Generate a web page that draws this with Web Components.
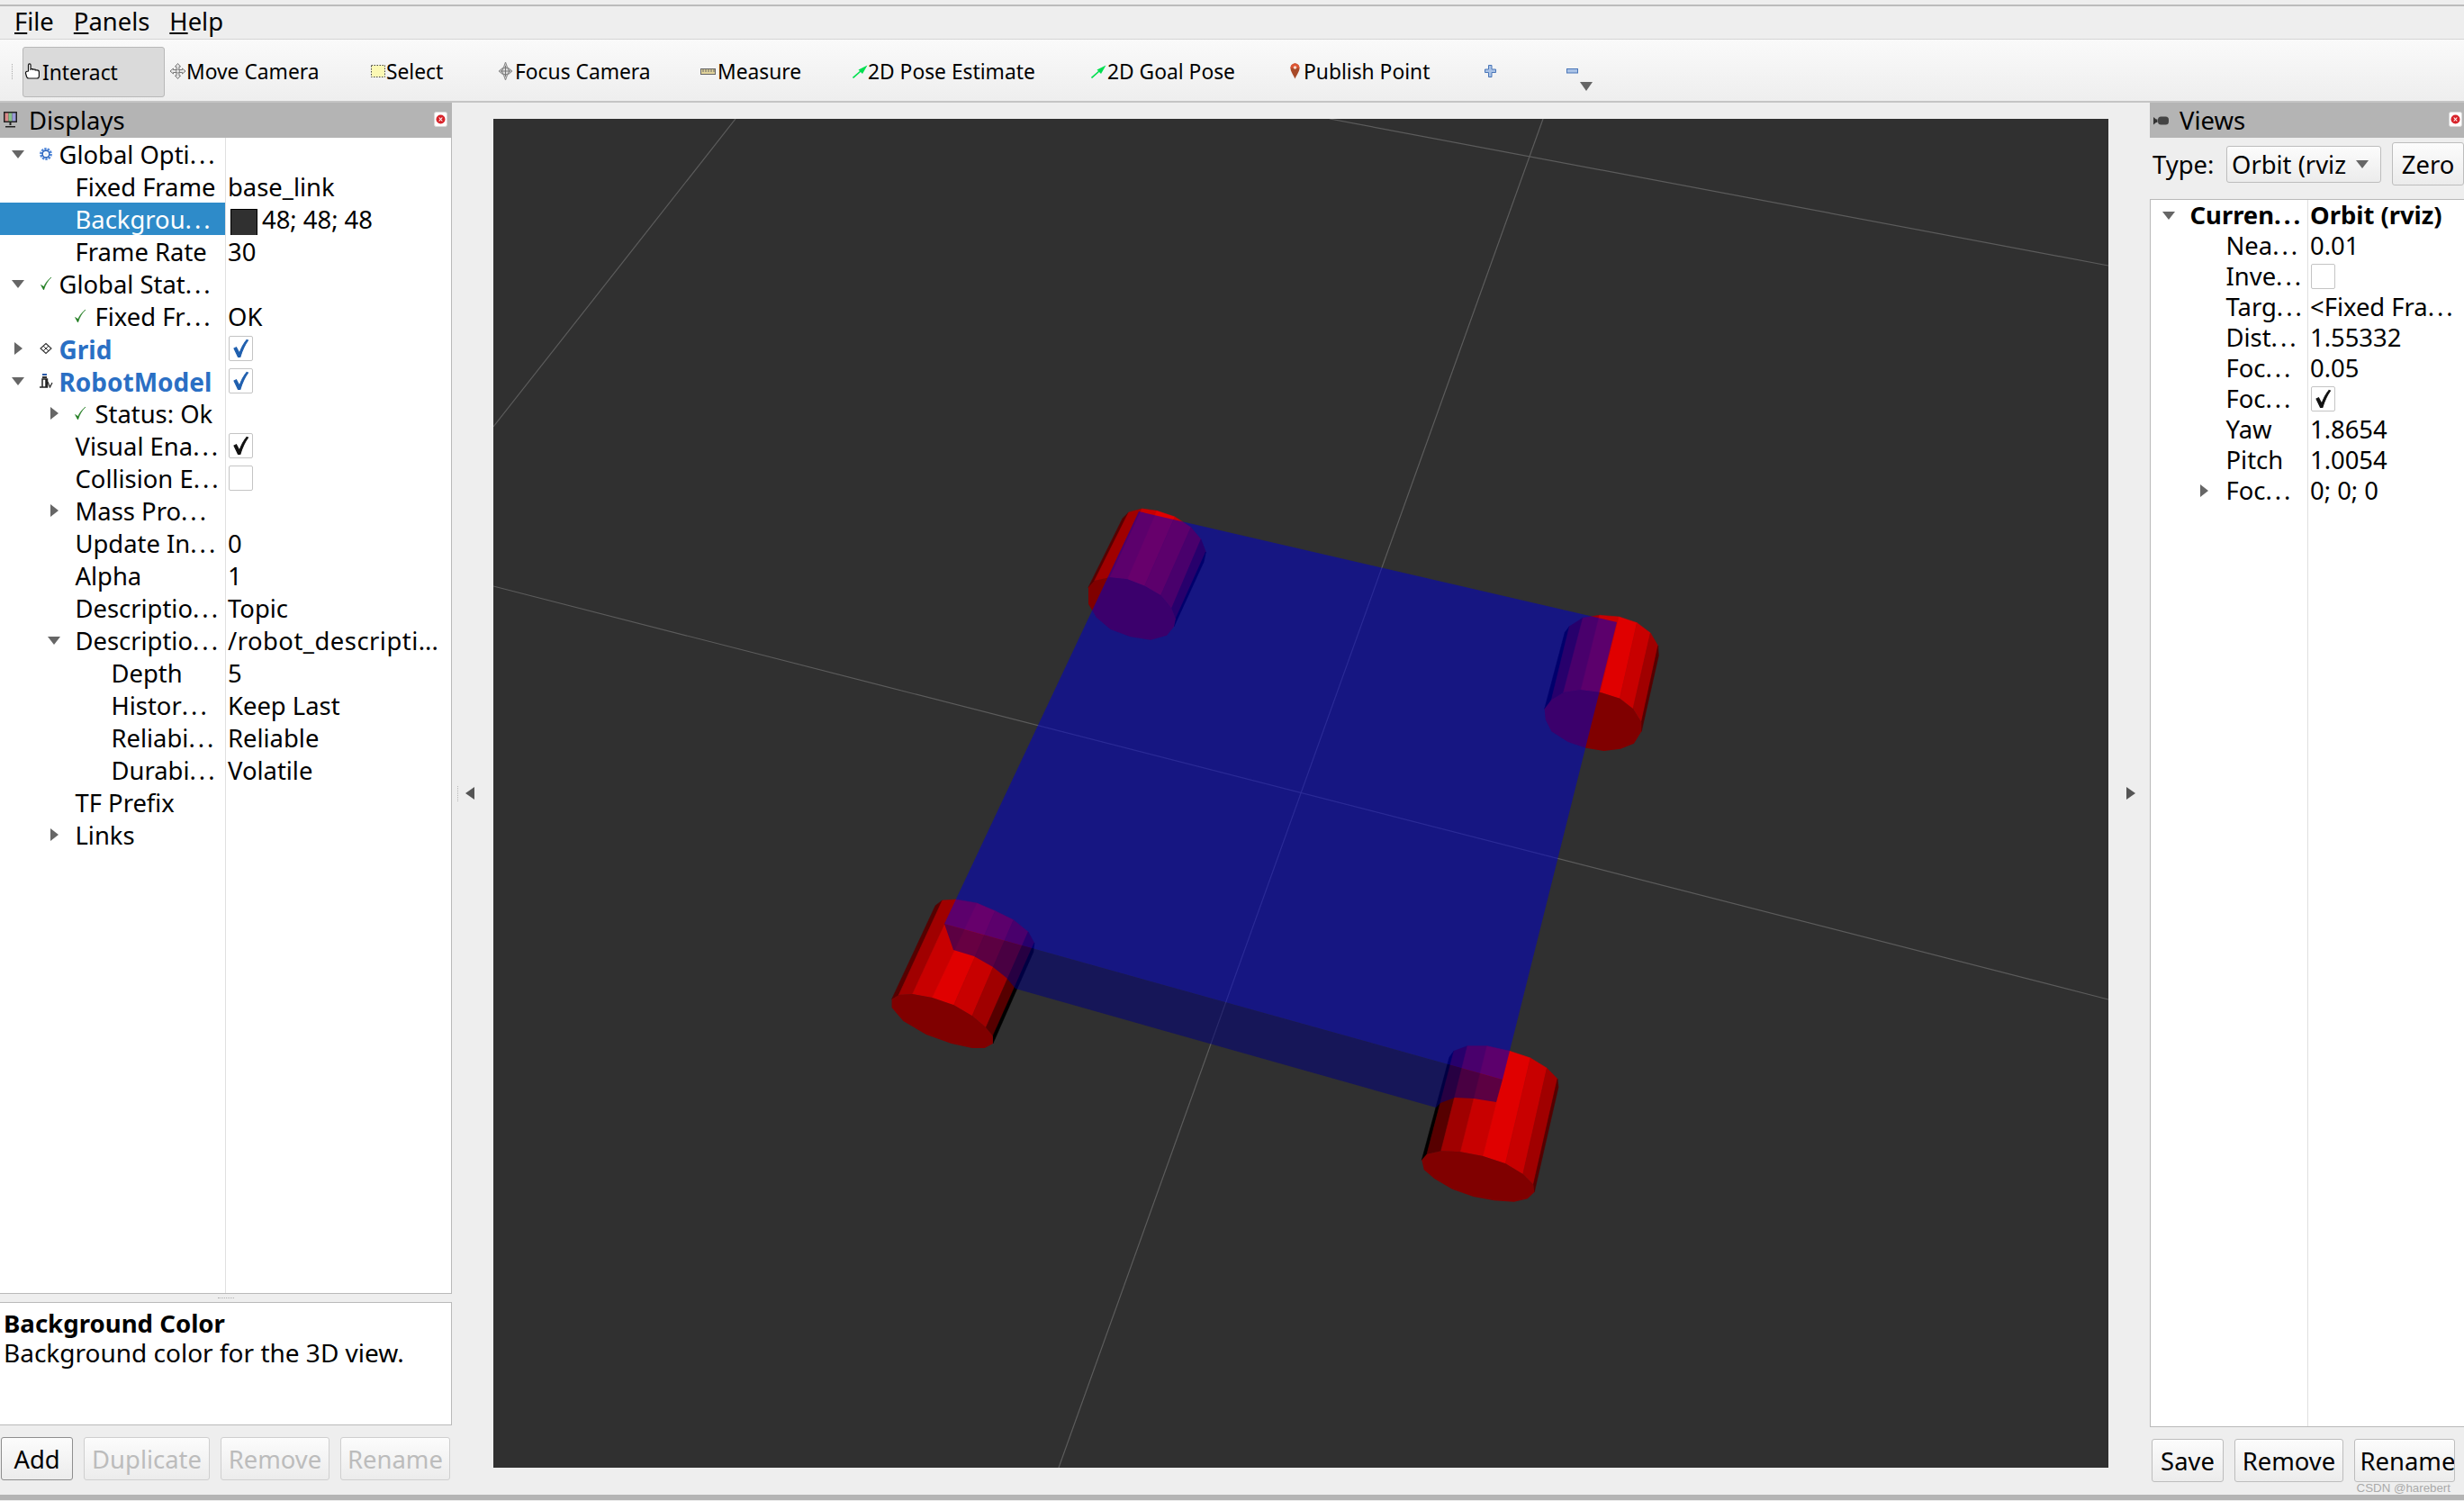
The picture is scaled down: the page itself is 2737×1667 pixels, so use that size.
<!DOCTYPE html>
<html>
<head>
<meta charset="utf-8">
<title>RViz</title>
<style>
  html, body { margin: 0; padding: 0; }
  body {
    width: 2737px; height: 1667px; overflow: hidden; position: relative;
    background: #eeeeee; color: #000;
    font: 27.4px "Noto Sans", sans-serif;
    display: flex; flex-direction: column;
  }
  rv-menubar span::first-letter { text-decoration: underline; }
  .e { letter-spacing: 3px; }
  .us { letter-spacing: 0.5px; }
  .main { display: flex; height: 1546px; }
  .band { height: 6px; background: #b4b4b4; }
  .type-row { display: flex; align-items: center; height: 58px; margin-bottom: 10px; padding-left: 3px; }
  .type-row .lbl { width: 82px; }
  .btns { display: flex; gap: 12px; }
  .watermark {
    position: absolute; right: 15px; bottom: 7px;
    font: 13.3px/14px "Liberation Sans", sans-serif; color: #aaa;
  }
  .desc { margin: 0; padding: 6px 4px; }
  .desc b { display: block; line-height: 33px; font-size: 27.6px; }
  .desc span { display: block; line-height: 32px; font-size: 28px; }
  .swatch { display: inline-block; width: 28px; height: 28px; background: #303030; border: 1px solid #000; margin: 0 5px 0 3px; vertical-align: middle; box-sizing: content-box; }
</style>
</head>
<body>
  <rv-menubar>
    <span>File</span><span>Panels</span><span>Help</span>
  </rv-menubar>
  <rv-toolbar>
    <rv-tool w="163" iw="20" active><rv-icon slot="icon" name="hand"></rv-icon>Interact</rv-tool>
    <rv-tool w="223" iw="18"><rv-icon slot="icon" name="move"></rv-icon>Move Camera</rv-tool>
    <rv-tool w="141" iw="17"><rv-icon slot="icon" name="select"></rv-icon>Select</rv-tool>
    <rv-tool w="225" iw="19"><rv-icon slot="icon" name="focus"></rv-icon>Focus Camera</rv-tool>
    <rv-tool w="169" iw="19"><rv-icon slot="icon" name="ruler"></rv-icon>Measure</rv-tool>
    <rv-tool w="265" iw="17"><rv-icon slot="icon" name="pose"></rv-icon>2D Pose Estimate</rv-tool>
    <rv-tool w="221" iw="18"><rv-icon slot="icon" name="pose"></rv-icon>2D Goal Pose</rv-tool>
    <rv-tool w="216" iw="15"><rv-icon slot="icon" name="pin"></rv-icon>Publish Point</rv-tool>
    <rv-tool w="91" iw="14"><rv-icon slot="icon" name="plus"></rv-icon></rv-tool>
    <rv-tool w="40" iw="14"><rv-icon slot="icon" name="minus"></rv-icon></rv-tool>
  </rv-toolbar>

  <div class="main">
    <rv-panel title-text="Displays" style="width:502px" tail="16">
      <rv-icon slot="icon" name="monitor"></rv-icon>
      <rv-tree style="--name-w:250px;--row-h:36px;--row-pad:2px;flex:1;border-width:0 1px 1px 0">
        <rv-row arrow="open" ax="20" ix="44" tx="66"><rv-icon slot="icon" name="gear"></rv-icon>Global Opti<span class="e">...</span></rv-row>
        <rv-row tx="84">Fixed Frame<span slot="value">base_link</span></rv-row>
        <rv-row tx="84" selected>Backgrou<span class="e">...</span><span slot="value"><i class="swatch"></i>48; 48; 48</span></rv-row>
        <rv-row tx="84">Frame Rate<span slot="value">30</span></rv-row>
        <rv-row arrow="open" ax="20" ix="44" tx="66"><rv-icon slot="icon" name="ok"></rv-icon>Global Stat<span class="e">...</span></rv-row>
        <rv-row ix="82" tx="106"><rv-icon slot="icon" name="ok"></rv-icon>Fixed Fr<span class="e">...</span><span slot="value">OK</span></rv-row>
        <rv-row arrow="closed" ax="20" ix="44" tx="66" kind="blue"><rv-icon slot="icon" name="grid"></rv-icon>Grid<rv-check slot="value" checked blue></rv-check></rv-row>
        <rv-row arrow="open" ax="20" ix="44" tx="66" kind="blue"><rv-icon slot="icon" name="robot"></rv-icon>RobotModel<rv-check slot="value" checked blue></rv-check></rv-row>
        <rv-row arrow="closed" ax="60" ix="82" tx="106"><rv-icon slot="icon" name="ok"></rv-icon>Status: Ok</rv-row>
        <rv-row tx="84">Visual Ena<span class="e">...</span><rv-check slot="value" checked></rv-check></rv-row>
        <rv-row tx="84">Collision E<span class="e">...</span><rv-check slot="value"></rv-check></rv-row>
        <rv-row arrow="closed" ax="60" tx="84">Mass Pro<span class="e">...</span></rv-row>
        <rv-row tx="84">Update In<span class="e">...</span><span slot="value">0</span></rv-row>
        <rv-row tx="84">Alpha<span slot="value">1</span></rv-row>
        <rv-row tx="84">Descriptio<span class="e">...</span><span slot="value">Topic</span></rv-row>
        <rv-row arrow="open" ax="60" tx="84">Descriptio<span class="e">...</span><span slot="value"><span class="us">/robot_descripti</span>...</span></rv-row>
        <rv-row tx="124">Depth<span slot="value">5</span></rv-row>
        <rv-row tx="124">Histor<span class="e">...</span><span slot="value">Keep Last</span></rv-row>
        <rv-row tx="124">Reliabi<span class="e">...</span><span slot="value">Reliable</span></rv-row>
        <rv-row tx="124">Durabi<span class="e">...</span><span slot="value">Volatile</span></rv-row>
        <rv-row tx="84">TF Prefix</rv-row>
        <rv-row arrow="closed" ax="60" tx="84">Links</rv-row>
      </rv-tree>
      <rv-hgrip></rv-hgrip>
      <rv-box style="height:137px">
        <div class="desc"><b>Background Color</b><span>Background color for the 3D view.</span></div>
      </rv-box>
      <div class="btns" style="margin-top:13px;padding-left:1px">
        <rv-button style="width:80px" strong>Add</rv-button>
        <rv-button style="width:140px" disabled>Duplicate</rv-button>
        <rv-button style="width:121px" disabled>Remove</rv-button>
        <rv-button style="width:122px" disabled>Rename</rv-button>
      </div>
    </rv-panel>

    <rv-splitter side="left"></rv-splitter>
    <rv-scene></rv-scene>
    <rv-splitter side="right"></rv-splitter>

    <rv-panel title-text="Views" style="width:349px" tail="14" right>
      <rv-icon slot="icon" name="camera"></rv-icon>
      <div class="type-row">
        <span class="lbl">Type:</span>
        <rv-combo>Orbit (rviz)</rv-combo>
        <rv-button style="width:80px;margin-left:12px">Zero</rv-button>
      </div>
      <rv-tree style="--name-w:174px;--row-h:34px;flex:1;border-width:1px 0 1px 1px">
        <rv-row arrow="open" ax="20" tx="44" kind="bold">Curren<span class="e">...</span><span slot="value"><b>Orbit (rviz)</b></span></rv-row>
        <rv-row tx="84">Nea<span class="e">...</span><span slot="value">0.01</span></rv-row>
        <rv-row tx="84">Inve<span class="e">...</span><rv-check slot="value"></rv-check></rv-row>
        <rv-row tx="84">Targ<span class="e">...</span><span slot="value">&lt;Fixed Fra<span class="e">...</span></span></rv-row>
        <rv-row tx="84">Dist<span class="e">...</span><span slot="value">1.55332</span></rv-row>
        <rv-row tx="84">Foc<span class="e">...</span><span slot="value">0.05</span></rv-row>
        <rv-row tx="84">Foc<span class="e">...</span><rv-check slot="value" checked></rv-check></rv-row>
        <rv-row tx="84">Yaw<span slot="value">1.8654</span></rv-row>
        <rv-row tx="84">Pitch<span slot="value">1.0054</span></rv-row>
        <rv-row arrow="closed" ax="59" tx="84">Foc<span class="e">...</span><span slot="value">0; 0; 0</span></rv-row>
      </rv-tree>
      <div class="btns" style="margin-top:13px;padding-left:2px">
        <rv-button style="width:80px">Save</rv-button>
        <rv-button style="width:121px">Remove</rv-button>
        <rv-button style="width:112px;padding-left:7px">Rename</rv-button>
      </div>
    </rv-panel>
  </div>
  <div class="band"></div>
  <div class="watermark">CSDN @harebert</div>

<script>
  const ICONS = {
    hand: [19, 20, '<path d="M4.5 9V2.2a1.3 1.3 0 0 1 2.6 0V8V6.5h2.4V8V7h2.4v1.3V7.8h2.2c1.4 0 2.3.8 2.3 2.2v4.5c0 1.4-.9 2.5-2.4 2.5H5c-1.3 0-2-.6-2.4-1.8L1.5 11.5C1.2 9.8 3 9 4.5 9z" fill="#fff" stroke="#111" stroke-width="1.2"/>'],
    move: [17, 18, '<path d="M8.5.5l3 3.5H10v3.5h3.5V6L17 9l-3.500 3v-1.500H10V14h1.500l-3 3.500-3-3.500H7v-3.500H3.500V12L0 9l3.500-3v1.500H7V4H5.500z" fill="#e8e8e8" stroke="#777"/><circle cx="8.500" cy="9" r="2" fill="none" stroke="#888"/>'],
    select: [17, 15, '<rect x=".5" y=".5" width="15" height="13" fill="#fbf8b4" stroke="#444" stroke-dasharray="1.500 1.500"/>'],
    focus: [17, 20, '<path d="M8.500 0l2 5.500L16 10l-5.500 4.500-2 5.500-2-5.500L1 10l5.500-4.500z" fill="#ccc" stroke="#888"/><circle cx="8.500" cy="10" r="4" fill="#ddd" stroke="#777"/><path d="M8.500 4v12M3 10h11" stroke="#777"/>'],
    ruler: [17, 7, '<rect x=".5" y=".5" width="16" height="6" fill="#e0d29a" stroke="#666"/><path d="M3 1v3M6 1v3M9 1v3M12 1v3M15 1v3" stroke="#666"/>'],
    pose: [17, 15, '<path d="M.5 14.500L9 7" stroke="#00e050" stroke-width="1.600"/><path d="M6.500 5.500l4.500 4.500L16.500.5z" fill="#00e050"/>'],
    pin: [11, 18, '<path d="M5.500.5C2.500.5.500 2.800.500 5.700c0 3.500 3 7 5 11.800 2-4.800 5-8.300 5-11.800C10.500 2.800 8.500.5 5.500.5z" fill="#a84a28"/><path d="M5.500.5C2.500.5.500 2.800.500 5.700l5-.5 5 .5C10.500 2.800 8.500.5 5.500.5z" fill="#dd5533"/><circle cx="5.500" cy="5" r="1.800" fill="#f6d8cc"/>'],
    plus: [13, 14, '<path d="M4.500.5h3.500v4.500h4.500v3.500h-4.500v5h-3.500v-5H.5v-3.500h4z" fill="#a9c2e6" stroke="#4a76b8"/>'],
    minus: [13, 6, '<rect x=".5" y=".5" width="12" height="4.500" fill="#a9c2e6" stroke="#4a76b8"/>'],
    monitor: [17, 21, '<rect x="1" y="1" width="15" height="12" fill="#222"/><rect x="2.500" y="2.500" width="4" height="9" fill="#d98a8a"/><rect x="6.500" y="2.500" width="4" height="9" fill="#86c08a"/><rect x="10.500" y="2.500" width="4" height="9" fill="#9a9ad8"/><path d="M7.500 13h2v3h-2zM3 17h11v1.500H3z" fill="#222"/>'],
    camera: [17, 10, '<path d="M0 1l3 2.500h1.500V7H3l-3 2.500z" fill="#333"/><rect x="5" y=".5" width="12" height="9" rx="3.500" fill="#444"/>'],
    gear: [14, 16, '<circle cx="7" cy="8" r="5.400" fill="none" stroke="#4f86d8" stroke-width="3" stroke-dasharray="2.300 1"/><circle cx="7" cy="8" r="3.800" fill="none" stroke="#2f66bc" stroke-width="1.400"/><circle cx="7" cy="8" r="1.500" fill="#e4eefa"/>'],
    ok: [14, 18, '<path d="M1.500 10.500l3 5.500C6.500 10 9 5.500 13 2 9.500 4.500 6.500 8.500 4.700 12.500z" fill="#1c7a1c" stroke="#1c7a1c" stroke-width=".6"/>'],
    grid: [14, 14, '<path d="M7 1.500L13 7l-6 5.500L1 7z" fill="#fff" stroke="#333" stroke-width="1.100"/><path d="M4 4.200L10 9.800M10 4.200L4 9.800" stroke="#333" stroke-width="1"/>'],
    robot: [15, 16, '<rect x="3" y="0" width="5" height="2" fill="#2a5aa8"/><rect x="3" y="3" width="5" height="2" fill="#333"/><path d="M1 15h2V6h4v9h1.500V6H7M0 15h8" fill="none" stroke="#222" stroke-width="1.500"/><path d="M9 9l2.500 6 2.500-5" fill="none" stroke="#333" stroke-width="1.300"/>'],
    close: [15, 17, '<rect x=".5" y=".5" width="14" height="16" rx="2" fill="#fff" stroke="#d8d8d8"/><circle cx="7.500" cy="8.500" r="5" fill="#d8232a"/><path d="M5.700 6.500l3.600 4M9.300 6.500l-3.600 4" stroke="#fff" stroke-width="1.100"/>']
  };

  class RvIcon extends HTMLElement {
    connectedCallback() {
      if (this.shadowRoot) return;
      const [w, h, body] = ICONS[this.getAttribute('name')];
      this.attachShadow({ mode: 'open' }).innerHTML = `
        <style>:host { display: inline-flex; align-items: center; line-height: 0; } svg { display: block; }</style>
        <svg width="${w}" height="${h}" viewBox="0 0 ${w} ${h}">${body}</svg>`;
    }
  }

  class RvMenubar extends HTMLElement {
    constructor() {
      super();
      this.attachShadow({ mode: 'open' }).innerHTML = `
        <style>
          :host { display: flex; box-sizing: border-box; height: 44px; padding-left: 16px; align-items: center;
                  border-top: 5px solid #eee; border-bottom: 1px solid #d5d5d5; position: relative; background: #eee;
                  box-shadow: inset 0 2px 0 #bbb; }
          ::slotted(span) { display: inline-block; margin-right: 22px; line-height: 36px; }
        </style>
        <slot></slot>`;
    }
  }

  class RvToolbar extends HTMLElement {
    constructor() {
      super();
      this.attachShadow({ mode: 'open' }).innerHTML = `
        <style>
          :host { display: flex; box-sizing: border-box; height: 70px; padding: 8px 0 6px 25px; align-items: stretch;
                  background: linear-gradient(#fafafa, #eeeeee); border-bottom: 2px solid #c4c4c4; position: relative; font-size: 22.8px; }
          .grip { position: absolute; left: 13px; top: 27px; height: 17px; border-left: 1px dotted #aaa; }
          .more { position: absolute; left: 1755px; top: 47px; border: 7.500px solid transparent; border-top: 10px solid #666; border-bottom: 0; }
        </style>
        <div class="grip"></div>
        <slot></slot>
        <div class="more"></div>`;
    }
  }

  class RvTool extends HTMLElement {
    constructor() {
      super();
      this.attachShadow({ mode: 'open' }).innerHTML = `
        <style>
          :host { display: block; box-sizing: border-box; flex: none; }
          .in { display: flex; align-items: center; height: 100%; box-sizing: border-box; white-space: nowrap; border: 1px solid transparent; border-radius: 3px; }
          :host([active]) .in { background: #dadada; border-color: #b8b8b8; height: 56px; }
          .ic { display: flex; flex: none; align-items: center; }
        </style>
        <div class="in"><span class="ic"><slot name="icon"></slot></span><slot></slot></div>`;
    }
    connectedCallback() {
      const active = this.hasAttribute('active');
      this.style.width = this.getAttribute('w') + 'px';
      const inner = this.shadowRoot.querySelector('.in');
      inner.style.width = (this.getAttribute('w') - (active ? 5 : 0)) + 'px';
      this.shadowRoot.querySelector('.ic').style.width = this.getAttribute('iw') + 'px';
      if (active) this.shadowRoot.querySelector('.ic').style.paddingLeft = '1px';
    }
  }

  class RvPanel extends HTMLElement {
    constructor() {
      super();
      this.attachShadow({ mode: 'open' }).innerHTML = `
        <style>
          :host { display: flex; flex-direction: column; box-sizing: border-box; flex: none; height: 100%; }
          .title { display: flex; align-items: center; height: 39px; flex: none; background: #b4b4b4; padding-left: 3px; }
          .txt { margin-left: 12px; }
          :host([right]) .title { padding-left: 4px; }
          .close { margin-left: auto; margin-right: 5px; margin-top: -3px; display: flex; }
          :host([right]) .close { margin-right: 2px; }
        </style>
        <div class="title"><slot name="icon"></slot><span class="txt"></span><span class="close"><rv-icon name="close"></rv-icon></span></div>
        <slot></slot>
        <div class="tail"></div>`;
    }
    connectedCallback() {
      this.shadowRoot.querySelector('.txt').textContent = this.getAttribute('title-text');
      this.shadowRoot.querySelector('.tail').style.cssText = 'flex:none;height:' + this.getAttribute('tail') + 'px';
    }
  }

  class RvTree extends HTMLElement {
    constructor() {
      super();
      this.attachShadow({ mode: 'open' }).innerHTML = `
        <style>
          :host { display: block; box-sizing: border-box; min-height: 0; overflow: hidden; border: 0 solid #b9b9b9;
                  background: linear-gradient(#e0e0e0, #e0e0e0) var(--name-w) 0 / 1px 100% no-repeat, #fff; }
        </style>
        <slot></slot>`;
    }
  }

  class RvRow extends HTMLElement {
    constructor() {
      super();
      this.attachShadow({ mode: 'open' }).innerHTML = `
        <style>
          :host { display: flex; height: var(--row-h); line-height: var(--row-h); white-space: nowrap; }
          .name { display: flex; align-items: center; width: var(--name-w); flex: none; box-sizing: border-box; overflow: hidden; padding-top: var(--row-pad, 0); }
          :host([selected]) .name { background: #2e8bc9; color: #fff; }
          :host([kind=blue]) .name { font-weight: 700; color: #2a6fc4; font-size: 28px; }
          :host([kind=bold]) .name { font-weight: 700; }
          .arrow { flex: none; width: 16px; height: 16px; display: none; align-items: center; justify-content: center; margin-top: calc(-1 * var(--row-pad, 0px)); }
          .open { border: 7.500px solid transparent; border-top: 9px solid #666; border-bottom: 0; }
          .closed { border: 7px solid transparent; border-left: 9px solid #666; border-right: 0; }
          .ic { flex: none; display: none; align-items: center; margin-top: calc(-1 * var(--row-pad, 0px)); }
          .val { flex: 1; min-width: 0; display: flex; align-items: center; padding-left: 3px; overflow: hidden; box-sizing: border-box; padding-top: var(--row-pad, 0); }
          ::slotted(rv-check) { margin-left: 1px; margin-top: calc(-1 * var(--row-pad, 0px)); }
        </style>
        <div class="name"><span class="arrow"><i></i></span><span class="ic"><slot name="icon"></slot></span><span class="text"><slot></slot></span></div>
        <div class="val"><slot name="value"></slot></div>`;
    }
    connectedCallback() {
      const root = this.shadowRoot;
      let cursor = 0;
      const kind = this.getAttribute('arrow');
      if (kind) {
        const arrow = root.querySelector('.arrow');
        arrow.style.display = 'flex';
        arrow.style.marginLeft = (+this.getAttribute('ax') - 8) + 'px';
        arrow.querySelector('i').className = kind;
        cursor = +this.getAttribute('ax') + 8;
      }
      if (this.hasAttribute('ix')) {
        const ic = root.querySelector('.ic');
        ic.style.display = 'flex';
        ic.style.marginLeft = (+this.getAttribute('ix') - cursor) + 'px';
        ic.style.width = '16px';
        cursor = +this.getAttribute('ix') + 16;
      }
      root.querySelector('.text').style.marginLeft = (+this.getAttribute('tx') - 0.5 - cursor) + 'px';
    }
  }

  class RvCheck extends HTMLElement {
    constructor() {
      super();
      this.attachShadow({ mode: 'open' }).innerHTML = `
        <style>
          :host { display: inline-flex; box-sizing: border-box; width: 27px; height: 28px; border: 1px solid #c4c4c4; border-radius: 2px; background: #fff; align-items: center; justify-content: center; }
          svg { display: none; }
          :host([checked]) svg { display: block; }
          path { fill: #111; stroke: #111; stroke-width: 1.100; }
          :host([blue]) path { fill: #1f5fae; stroke: #1f5fae; }
        </style>
        <svg width="20" height="22" viewBox="0 0 20 22"><path d="M2 11l2.500-1.200 3.500 6.500C10 10.500 12.500 5.500 16 1.500l1.500.5C13.500 7.500 10.800 14 8.800 20.500H6.500z"/></svg>`;
    }
  }

  class RvBox extends HTMLElement {
    constructor() {
      super();
      this.attachShadow({ mode: 'open' }).innerHTML = `
        <style>:host { display: block; box-sizing: border-box; flex: none; background: #fff; border: 1px solid #b9b9b9; border-left: 0; }</style>
        <slot></slot>`;
    }
  }

  class RvHgrip extends HTMLElement {
    constructor() {
      super();
      this.attachShadow({ mode: 'open' }).innerHTML = `
        <style>
          :host { display: flex; height: 9px; flex: none; align-items: center; justify-content: center; }
          i { width: 18px; border-top: 1px dotted #b0b0b0; }
        </style>
        <i></i>`;
    }
  }

  class RvButton extends HTMLElement {
    constructor() {
      super();
      this.attachShadow({ mode: 'open' }).innerHTML = `
        <style>
          :host { display: inline-flex; flex: none; box-sizing: border-box; height: 48px; align-items: center; justify-content: center;
                  background: linear-gradient(#fcfcfc, #ececec); border: 1px solid #bdbdbd; border-radius: 3px; white-space: nowrap; overflow: hidden; }
          :host([strong]) { border-color: #8e8e8e; }
          :host([disabled]) { color: #bcbcbc; border-color: #cfcfcf; }
        </style>
        <slot></slot>`;
    }
  }

  class RvCombo extends HTMLElement {
    constructor() {
      super();
      this.attachShadow({ mode: 'open' }).innerHTML = `
        <style>
          :host { display: flex; flex: none; box-sizing: border-box; width: 172px; height: 41px; align-items: center;
                  background: linear-gradient(#fcfcfc, #ececec); border: 1px solid #bdbdbd; border-radius: 3px; padding-left: 5px; }
          .t { width: 127px; overflow: hidden; white-space: nowrap; }
          .a { margin-left: 11px; border: 7.500px solid transparent; border-top: 9px solid #666; border-bottom: 0; }
        </style>
        <span class="t"><slot></slot></span><i class="a"></i>`;
    }
  }

  class RvSplitter extends HTMLElement {
    constructor() {
      super();
      this.attachShadow({ mode: 'open' }).innerHTML = `
        <style>
          :host { display: flex; flex: none; width: 46px; box-sizing: border-box; align-items: center; padding: 0 0 12px 6px; }
          .dots { height: 17px; border-left: 1px dotted #b8b8b8; }
          .a { margin-left: 8px; border: 7px solid transparent; border-left: 0; border-right: 10px solid #555; }
          :host([side=right]) .a { border-right: 0; border-left: 10px solid #555; margin-left: 13px; }
          :host([side=right]) .dots { border-left-color: transparent; }
        </style>
        <div class="dots"></div><i class="a"></i>`;
    }
  }

  // the 3D view, coordinates are screenshot pixels
  const DARK_L = ['#560000', '#a00000', '#c80000', '#e00000', '#c80000', '#a00000', '#560000', '#000000'];
  const DARK_R = ['#000000', '#560000', '#a00000', '#c80000', '#e00000', '#c80000', '#a00000', '#560000'];
  const WHEELS = [
    { o: [1180, 540], s: [2.24, 3], cols: DARK_L,
      b: [[65,340],[80,318],[118,307],[162,313],[205,335],[245,367],[272,410],[282,445],[278,470]],
      t: [[150,110],[165,90],[198,78],[235,85],[280,105],[320,140],[345,180],[357,222],[352,255]],
      e: [[260,500],[220,515],[170,505],[120,480],[85,440],[65,395]] },
    { o: [1680, 640], s: [3, 3], cols: DARK_R,
      b: [[107,445],[130,415],[170,390],[228,382],[293,390],[358,410],[402,445],[430,490],[430,520]],
      t: [[175,190],[190,170],[235,142],[290,133],[355,138],[415,158],[460,192],[485,235],[487,268]],
      e: [[405,560],[360,578],[305,585],[245,575],[185,555],[130,520],[110,480]] },
    { o: [960, 980], s: [1.96, 3], cols: DARK_L,
      b: [[60,392],[75,378],[105,375],[148,387],[195,412],[235,448],[265,487],[280,515],[280,540]],
      t: [[155,80],[170,63],[200,60],[245,72],[285,98],[325,128],[357,168],[370,205],[368,235]],
      e: [[262,555],[235,555],[190,540],[135,510],[85,465],[60,420]] },
    { o: [1540, 1100], s: [3, 3], cols: DARK_R,
      b: [[118,568],[135,548],[182,538],[247,541],[322,555],[397,580],[455,615],[490,650],[493,675]],
      t: [[210,225],[225,205],[270,188],[335,188],[410,205],[480,228],[535,262],[570,298],[573,325]],
      e: [[470,697],[425,707],[360,703],[290,690],[220,665],[160,630],[125,600]] }
  ];

  function wheelSvg(w) {
    const p = ([x, y]) => `${(w.o[0] + x / w.s[0]).toFixed(1)},${(w.o[1] + y / w.s[1]).toFixed(1)}`;
    let out = '';
    w.cols.forEach((c, i) => {
      const pts = [w.b[i], w.b[i + 1], w.t[i + 1], w.t[i]].map(p).join(' ');
      out += `<polygon points="${pts}" fill="${c}" stroke="${c}" stroke-width=".6"/>`;
    });
    const cap = [...w.b, ...w.e].map(p).join(' ');
    out += `<polygon points="${cap}" fill="#800000"/>`;
    return out;
  }

  class RvScene extends HTMLElement {
    constructor() {
      super();
      const lines = [[817, 133, 548, 475], [1714, 133, 1176, 1631], [1477, 133, 2342, 296], [548, 652, 2342, 1111]]
        .map(([a, b, c, d]) => `<line x1="${a}" y1="${b}" x2="${c}" y2="${d}"/>`).join('');
      this.attachShadow({ mode: 'open' }).innerHTML = `
        <style>
          :host { display: block; flex: none; width: 1794px; height: 1498px; margin-top: 18px; background: #303030; }
          svg { display: block; }
        </style>
        <svg width="1794" height="1498" viewBox="548 133 1794 1498">
          <g stroke="#5c5c5c" stroke-width="1.200">${lines}</g>
          ${WHEELS.map(wheelSvg).join('')}
          <polygon points="1265,569 1796,692 1669,1200 1049,1027" fill="rgb(0,0,200)" fill-opacity=".54"/>
          <polygon points="1049,1027 1669,1200 1662,1225 1637,1221 1616,1220 1600,1226 1595,1231 1128,1099 1118,1087 1103,1075 1082,1063 1059,1056" fill="rgb(0,0,122)" fill-opacity=".54"/>
        </svg>`;
    }
  }

  customElements.define('rv-icon', RvIcon);
  customElements.define('rv-menubar', RvMenubar);
  customElements.define('rv-toolbar', RvToolbar);
  customElements.define('rv-tool', RvTool);
  customElements.define('rv-panel', RvPanel);
  customElements.define('rv-tree', RvTree);
  customElements.define('rv-row', RvRow);
  customElements.define('rv-check', RvCheck);
  customElements.define('rv-box', RvBox);
  customElements.define('rv-hgrip', RvHgrip);
  customElements.define('rv-button', RvButton);
  customElements.define('rv-combo', RvCombo);
  customElements.define('rv-splitter', RvSplitter);
  customElements.define('rv-scene', RvScene);
</script>
</body>
</html>
